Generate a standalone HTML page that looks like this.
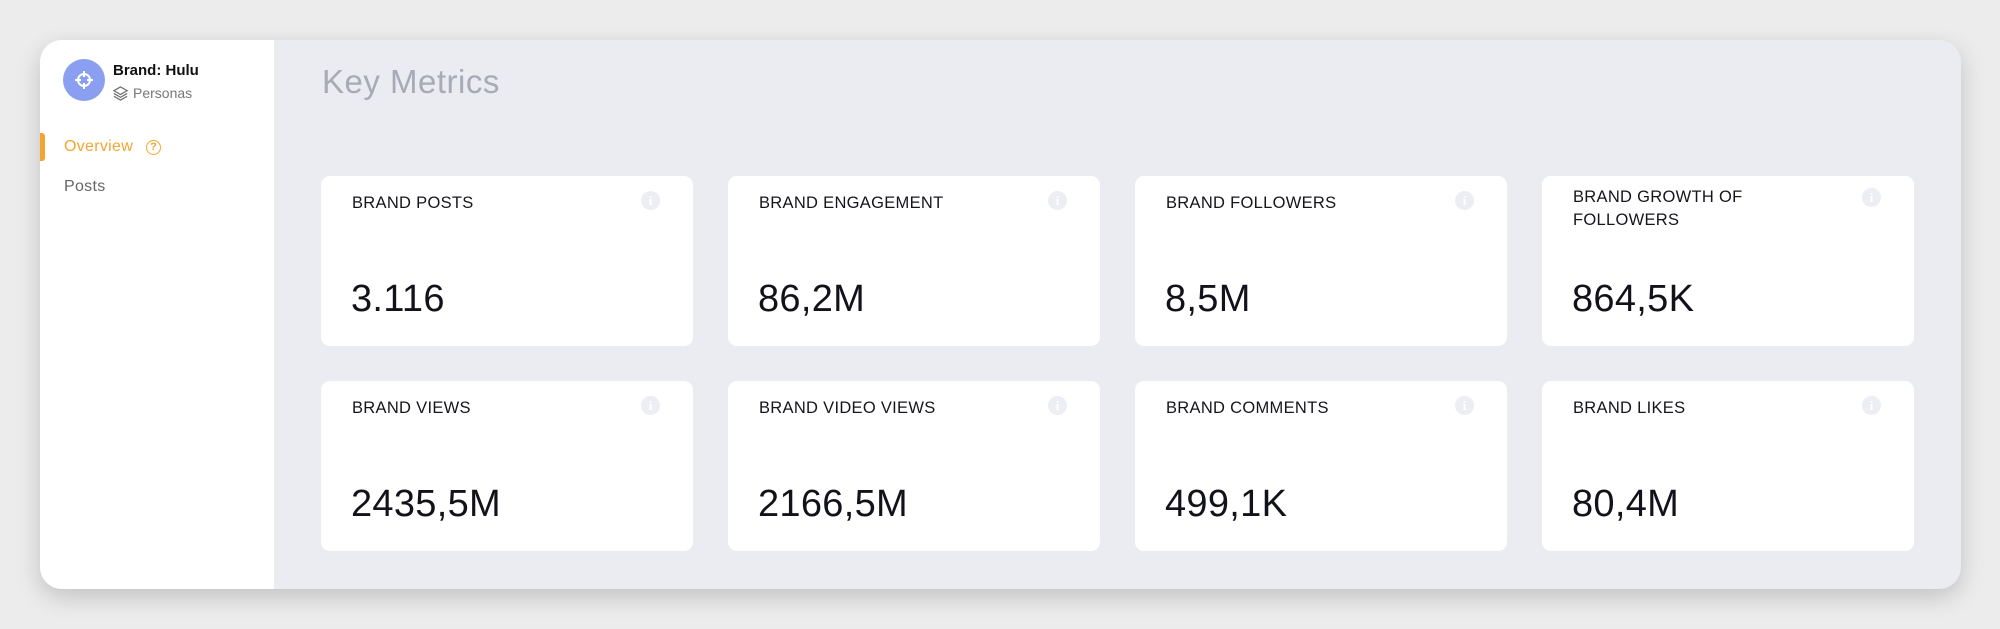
<!DOCTYPE html>
<html><head><meta charset="utf-8"><style>
*{margin:0;padding:0;box-sizing:border-box}
body{width:2000px;height:629px;background:#ececec;font-family:"Liberation Sans",sans-serif;position:relative;overflow:hidden}
.wrap{position:absolute;left:40px;top:40px;width:1921px;height:549px;border-radius:22px;background:#eaecf1;overflow:hidden;box-shadow:0 8px 24px rgba(0,0,0,.18)}
.side{position:absolute;left:0;top:0;width:234px;height:549px;background:#fff}
.av{position:absolute;left:23px;top:19px;width:42px;height:42px;border-radius:50%;background:#8a9ff0}
.t{position:absolute;white-space:nowrap}
.card{position:absolute;width:372px;height:170px;background:#fff;border-radius:9px}
.lab{position:absolute;left:31px;top:16px;font-size:16.5px;color:#15151c;letter-spacing:.3px;line-height:23px;width:240px}
.val{position:absolute;left:30px;top:102px;font-size:38px;color:#12121a;letter-spacing:.3px}
.i{position:absolute;left:320px;top:15px;width:19px;height:19px;border-radius:50%;background:#eceef3;color:#fff;font-size:13px;font-weight:bold;text-align:center;line-height:19px;font-family:"Liberation Serif",serif}
</style></head><body>
<div class="wrap">
<div class="side">
<div class="av"><svg width="42" height="42" viewBox="0 0 42 42"><circle cx="21" cy="21" r="6" fill="none" stroke="#fff" stroke-width="2"/><path d="M21 12v6M21 24v6M12 21h6M24 21h6" stroke="#fff" stroke-width="2"/></svg></div>
<div class="t" style="left:73px;top:22px;font-size:15px;font-weight:bold;color:#111">Brand: Hulu</div>
<svg style="position:absolute;left:72px;top:45px" width="17" height="17" viewBox="0 0 18 18"><path d="M9 2L16 6 9 10 2 6Z M2 9l7 4 7-4 M2 12l7 4 7-4" fill="none" stroke="#777" stroke-width="1.4"/></svg>
<div class="t" style="left:93px;top:45px;font-size:14px;color:#777">Personas</div>
<div style="position:absolute;left:0;top:93px;width:5px;height:28px;background:#f3a530;border-radius:0 3px 3px 0"></div>
<div class="t" style="left:24px;top:98px;font-size:16px;color:#f3a530;letter-spacing:.3px">Overview</div>
<div style="position:absolute;left:106px;top:100px;width:15px;height:15px;border:1.5px solid #f3a530;border-radius:50%;color:#f3a530;font-size:11px;text-align:center;line-height:12px;font-weight:bold">?</div>
<div class="t" style="left:24px;top:138px;font-size:16px;color:#666;letter-spacing:.3px">Posts</div>
</div>
<div class="t" style="left:282px;top:23px;font-size:33px;color:#a8aab6;letter-spacing:.5px">Key Metrics</div>
<div class="card" style="left:281px;top:136px"><div class="lab">BRAND POSTS</div><div class="i">i</div><div class="val">3.116</div></div>
<div class="card" style="left:688px;top:136px"><div class="lab">BRAND ENGAGEMENT</div><div class="i">i</div><div class="val">86,2M</div></div>
<div class="card" style="left:1095px;top:136px"><div class="lab">BRAND FOLLOWERS</div><div class="i">i</div><div class="val">8,5M</div></div>
<div class="card" style="left:1502px;top:136px"><div class="lab" style="top:10px">BRAND GROWTH OF FOLLOWERS</div><div class="i" style="top:12px">i</div><div class="val">864,5K</div></div>
<div class="card" style="left:281px;top:341px"><div class="lab">BRAND VIEWS</div><div class="i">i</div><div class="val">2435,5M</div></div>
<div class="card" style="left:688px;top:341px"><div class="lab">BRAND VIDEO VIEWS</div><div class="i">i</div><div class="val">2166,5M</div></div>
<div class="card" style="left:1095px;top:341px"><div class="lab">BRAND COMMENTS</div><div class="i">i</div><div class="val">499,1K</div></div>
<div class="card" style="left:1502px;top:341px"><div class="lab">BRAND LIKES</div><div class="i">i</div><div class="val">80,4M</div></div>
</div>
</body></html>
